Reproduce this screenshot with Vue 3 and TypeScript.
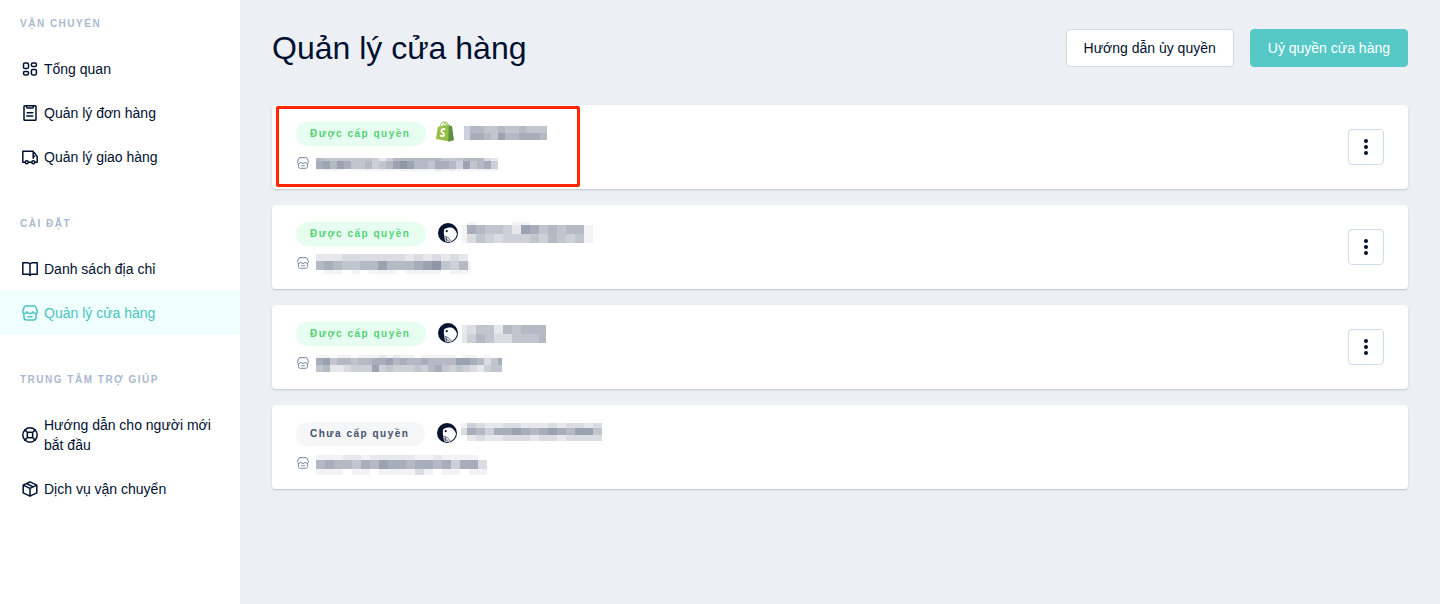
<script setup lang="ts">
type IconName = 'overview' | 'orders' | 'truck' | 'book' | 'store' | 'support' | 'box'

interface NavItem {
  label: string
  icon: IconName
  active?: boolean
}

interface NavGroup {
  title: string
  items: NavItem[]
}

interface MosaicRow {
  h: number
  tones: string
}

interface Mosaic {
  width: number
  top: number
  lead: number
  cell: number
  rows: MosaicRow[]
}

interface Store {
  id: number
  granted: boolean
  platform: 'shopify' | 'whale'
  name: Mosaic
  email: Mosaic
  highlighted?: boolean
}

interface Cell {
  x: number
  y: number
  w: number
  h: number
  o: number
}

const storeIconPath =
  'M4 .9h8c1 0 1.600.5 1.900 1.400l1.300 4.100c.3 1.300-.6 2.200-1.700 2.200-1.300 0-2-.8-2.500-1.900-.4 1.200-1.500 1.900-3 1.900s-2.600-.7-3-1.900C4.500 7.800 3.800 8.600 2.500 8.600 1.400 8.600.5 7.700.8 6.400l1.300-4.100C2.400 1.400 3 .9 4 .9zM1.900 8.700v3.600c0 1.800 1 2.800 2.800 2.800h6.600c1.800 0 2.800-1 2.800-2.800V8.700M6 11.700h4'

const groups: NavGroup[] = [
  {
    title: 'Vận chuyển',
    items: [
      { label: 'Tổng quan', icon: 'overview' },
      { label: 'Quản lý đơn hàng', icon: 'orders' },
      { label: 'Quản lý giao hàng', icon: 'truck' },
    ],
  },
  {
    title: 'Cài đặt',
    items: [
      { label: 'Danh sách địa chỉ', icon: 'book' },
      { label: 'Quản lý cửa hàng', icon: 'store', active: true },
    ],
  },
  {
    title: 'Trung tâm trợ giúp',
    items: [
      { label: 'Hướng dẫn cho người mới bắt đầu', icon: 'support' },
      { label: 'Dịch vụ vận chuyển', icon: 'box' },
    ],
  },
]

// Each digit is the strength of one block in a masked text.
const stores: Store[] = [
  {
    id: 1,
    granted: true,
    platform: 'shopify',
    highlighted: true,
    name: {
      width: 85, top: 4, lead: 6, cell: 7,
      rows: [{ h: 7, tones: '466556556555' }, { h: 7, tones: '477658667776' }],
    },
    email: {
      width: 182, top: 7, lead: 7, cell: 7,
      rows: [
        { h: 3, tones: '65555555424666666655566632' },
        { h: 8, tones: '78687556456898665776485674' },
        { h: 2, tones: '11110111111111111212111111' },
      ],
    },
  },
  {
    id: 2,
    granted: true,
    platform: 'whale',
    name: {
      width: 131, top: 0, lead: 5, cell: 9,
      rows: [
        { h: 3, tones: '010000110000000' },
        { h: 9, tones: '176554287565661' },
        { h: 9, tones: '135434445465451' },
      ],
    },
    email: {
      width: 155, top: 3, lead: 8, cell: 9,
      rows: [
        { h: 7, tones: '222333333323232320' },
        { h: 9, tones: '676556686667895461' },
        { h: 4, tones: '011010111011110110' },
      ],
    },
  },
  {
    id: 3,
    granted: true,
    platform: 'whale',
    name: {
      width: 84, top: 3, lead: 5, cell: 9,
      rows: [{ h: 9, tones: '2355265666' }, { h: 9, tones: '2465335556' }],
    },
    email: {
      width: 186, top: 4, lead: 7, cell: 7,
      rows: [
        { h: 3, tones: '110110111212110111110110100' },
        { h: 7, tones: '785665667786766766668876357' },
        { h: 7, tones: '562234448454445467545432455' },
      ],
    },
  },
  {
    id: 4,
    granted: false,
    platform: 'whale',
    name: {
      width: 141, top: 1, lead: 6, cell: 9,
      rows: [
        { h: 5, tones: '1432233222323323' },
        { h: 7, tones: '3764778767876885' },
        { h: 6, tones: '0232233323323333' },
      ],
    },
    email: {
      width: 171, top: 4, lead: 9, cell: 9,
      rows: [
        { h: 5, tones: '1112212222211211110' },
        { h: 9, tones: '6766576877677674773' },
        { h: 7, tones: '1110110111131011011' },
      ],
    },
  },
]

function cellsOf(m: Mosaic): Cell[] {
  const cells: Cell[] = []
  let y = m.top
  for (const row of m.rows) {
    let x = 0
    for (let i = 0; i < row.tones.length; i++) {
      const w = i === 0 ? m.lead : m.cell
      cells.push({ x, y, w, h: row.h, o: Number(row.tones[i]) / 9 })
      x += w
    }
    y += row.h
  }
  return cells
}
</script>

<template>
  <div class="layout">
    <aside class="sidebar">
      <nav>
        <section v-for="group in groups" :key="group.title" class="group">
          <h2 class="group-title">{{ group.title }}</h2>
          <ul class="menu">
            <li v-for="item in group.items" :key="item.label">
              <a href="#" class="menu-link" :class="{ active: item.active }">
                <svg class="menu-icon" viewBox="0 0 16 16" aria-hidden="true">
                  <template v-if="item.icon === 'overview'">
                    <rect x="1.5" y="2" width="5" height="5.6" rx="1.4" />
                    <rect x="9.4" y="2" width="5" height="3.6" rx="1.4" />
                    <rect x="1.5" y="10.4" width="5" height="3.6" rx="1.4" />
                    <rect x="9.4" y="8.4" width="5" height="5.6" rx="1.4" />
                  </template>
                  <template v-else-if="item.icon === 'orders'">
                    <rect x="2" y="0.8" width="12" height="14.4" rx="0.8" />
                    <path d="M4.6 1v1.1c0 .6.4 1 1 1h4.800c.6 0 1-.4 1-1V1M5.200 7.700h5.600M4.800 11h6" />
                  </template>
                  <template v-else-if="item.icon === 'truck'">
                    <path d="M2.500 13.200H.8V2.200h10.400M6.700 13.200h2.500M11.200 2.200v1.600h1.200l2.800 3.800v5.600h-1.700M11.200 7.300h1.400M11.200 3.800v5.400" />
                    <circle cx="4.700" cy="13.300" r="1.500" />
                    <circle cx="11.300" cy="13.300" r="1.500" />
                  </template>
                  <template v-else-if="item.icon === 'book'">
                    <path d="M8 3.200C7.500 2.300 6.700 1.800 5.600 1.800H.8v11.400h5.400c.9 0 1.500.5 1.800 1.300.3-.8.9-1.300 1.800-1.300h5.400V1.800h-4.800C9.300 1.800 8.500 2.300 8 3.200zM8 3.200v11.300" />
                  </template>
                  <template v-else-if="item.icon === 'store'">
                    <path :d="storeIconPath" />
                  </template>
                  <template v-else-if="item.icon === 'support'">
                    <circle cx="8" cy="8" r="7.200" />
                    <rect x="5.300" y="5.300" width="5.400" height="5.400" rx="1.500" />
                    <path d="M2.900 2.900l2.800 2.800M13.100 2.900l-2.800 2.800M2.900 13.100l2.800-2.800M13.100 13.100l-2.800-2.800" />
                  </template>
                  <template v-else>
                    <path d="M8 .8l6.800 3.300v7.800L8 15.200l-6.800-3.300V4.100L8 .8zM1.200 4.100L8 7.400l6.800-3.300M8 7.400v7.800M4.500 2.500l6.700 3.300" />
                  </template>
                </svg>
                <span>{{ item.label }}</span>
              </a>
            </li>
          </ul>
        </section>
      </nav>
    </aside>

    <main class="content">
      <header class="page-header">
        <h1>Quản lý cửa hàng</h1>
        <div class="actions">
          <button type="button" class="btn">Hướng dẫn ủy quyền</button>
          <button type="button" class="btn btn-primary">Uỷ quyền cửa hàng</button>
        </div>
      </header>

      <ul class="stores">
        <li v-for="store in stores" :key="store.id" class="card">
          <div class="info">
            <div class="name-line">
              <span class="badge" :class="{ granted: store.granted }">
                {{ store.granted ? 'Được cấp quyền' : 'Chưa cấp quyền' }}
              </span>
              <svg v-if="store.platform === 'shopify'" class="logo-shopify" viewBox="0 0 18 21" aria-hidden="true">
                <path d="M4 5.500C4.600 2.800 6.300.9 8 1c1.600.1 2.300 1.700 2.400 4M7.200 5c.3-2.200 1.500-3.600 2.900-3.600 1 0 1.700.9 2 2.600" fill="none" stroke="#95bf47" stroke-width="1" />
                <path d="M1.800 5.900l11-2.500.9 17.100L0 18z" fill="#95bf47" />
                <path d="M12.800 3.400l1.500 1.500 1.700.2L18 19.300l-5.700 1.500z" fill="#5e8e3e" />
                <path d="M9.300 8.500c-1.700-.9-4-.3-3.900 1.500.1 1.900 3 1.900 2.700 3.900-.3 1.700-2.400 1.600-4 .4" fill="none" stroke="#fff" stroke-width="1.900" />
              </svg>
              <svg v-else class="logo-whale" viewBox="0 0 20 20" aria-hidden="true">
                <circle cx="10" cy="10" r="10" fill="#06142f" />
                <path d="M6.200 6.300C8 4.800 10.500 4.300 13.500 4.500c2.800 1.200 4.700 3.300 5.500 6.300-.6 3.600-2.600 6.200-5.700 7.600L6.600 14C5.700 11.300 5.600 8.700 6.200 6.300z" fill="#fff" />
                <path d="M6.400 13.200l7 5.200c-1.900.7-3.800.8-5.700.2C6.800 17.200 6.300 15.300 6.400 13.200z" fill="#eef0f3" />
                <path d="M6.600 13.200c3 .6 5.400 2.400 6.700 5M8.200 14l.4 4.200M7 15.500l4.500 3" fill="none" stroke="#06142f" stroke-width=".6" />
                <circle cx="8.700" cy="8.200" r="1.100" fill="#06142f" />
              </svg>
              <svg class="mask" :width="store.name.width" height="24" aria-hidden="true">
                <rect v-for="(c, i) in cellsOf(store.name)" :key="i" :x="c.x" :y="c.y" :width="c.w" :height="c.h" :fill-opacity="c.o" />
              </svg>
            </div>
            <div class="email-line">
              <svg class="email-icon" viewBox="0 0 16 16" aria-hidden="true">
                <path :d="storeIconPath" />
              </svg>
              <svg class="mask" :width="store.email.width" height="24" aria-hidden="true">
                <rect v-for="(c, i) in cellsOf(store.email)" :key="i" :x="c.x" :y="c.y" :width="c.w" :height="c.h" :fill-opacity="c.o" />
              </svg>
            </div>
          </div>
          <button v-if="store.granted" type="button" class="more" aria-label="Tùy chọn">
            <svg viewBox="0 0 16 16" aria-hidden="true">
              <circle cx="8" cy="2" r="2" />
              <circle cx="8" cy="8" r="2" />
              <circle cx="8" cy="14" r="2" />
            </svg>
          </button>
          <span v-if="store.highlighted" class="highlight"></span>
        </li>
      </ul>
    </main>
  </div>
</template>

<style>
body {
  margin: 0;
  background: #eceff4;
}
</style>

<style scoped>
.layout {
  display: flex;
  min-height: 100vh;
  font-family: "Liberation Sans", Arial, sans-serif;
  font-size: 14px;
  line-height: 20px;
  color: #00102f;
}

.sidebar {
  flex: 0 0 240px;
  box-sizing: border-box;
  padding-top: 16px;
  background: #fff;
}

.group + .group {
  margin-top: 37px;
}

.group-title {
  margin: 0 0 15px;
  padding: 0 20px;
  font-size: 10px;
  line-height: 16px;
  font-weight: 700;
  letter-spacing: 0.15em;
  text-transform: uppercase;
  color: #a9b9d0;
}

.menu,
.stores {
  margin: 0;
  padding: 0;
  list-style: none;
}

.menu-link {
  display: flex;
  align-items: center;
  gap: 6px;
  padding: 12px 16px 12px 22px;
  color: inherit;
  text-decoration: none;
}

.menu-link.active {
  background: #eefffe;
  color: #4cc3c1;
}

.menu-icon {
  flex: none;
  width: 16px;
  height: 16px;
  fill: none;
  stroke: currentColor;
  stroke-width: 1.5;
  stroke-linejoin: round;
  stroke-linecap: round;
}

.content {
  flex: 1;
  min-width: 0;
  padding: 28px 32px;
}

.page-header {
  display: flex;
  align-items: center;
  justify-content: space-between;
  margin-bottom: 37px;
}

h1 {
  margin: 0;
  font-size: 32px;
  line-height: 40px;
  font-weight: 400;
}

.actions {
  display: flex;
  gap: 16px;
}

.btn {
  height: 38px;
  padding: 0 17px;
  border: 1px solid #cddbec;
  border-radius: 4px;
  background: #fff;
  color: inherit;
  font: inherit;
}

.btn-primary {
  border-color: #56c9c7;
  background: #56c9c7;
  color: #fff;
}

.stores {
  display: flex;
  flex-direction: column;
  gap: 16px;
}

.card {
  position: relative;
  display: flex;
  align-items: center;
  justify-content: space-between;
  padding: 17px 24px;
  border-radius: 4px;
  background: #fff;
  box-shadow: 0 1px 2px rgba(40, 50, 90, 0.22);
}

.info {
  display: flex;
  flex-direction: column;
  gap: 8px;
}

.name-line {
  display: flex;
  align-items: center;
  height: 24px;
}

.badge {
  padding: 0 16px 0 14px;
  border-radius: 12px;
  background: #f4f6f8;
  color: #44526b;
  font-size: 10px;
  line-height: 24px;
  font-weight: 700;
  letter-spacing: 0.15em;
  white-space: nowrap;
}

.badge.granted {
  background: #e8fdf1;
  color: #52d273;
}

.logo-shopify {
  width: 18px;
  height: 21px;
  margin: 0 10px 6px;
}

.logo-whale {
  width: 20px;
  height: 20px;
  margin: 0 4px 2px 12px;
}

.mask {
  fill: #8f96a7;
  shape-rendering: crispEdges;
}

.email-line {
  display: flex;
  align-items: center;
  gap: 6px;
  height: 18px;
}

.email-icon {
  width: 12px;
  height: 12px;
  padding: 0 1px;
  fill: none;
  stroke: #7686a0;
  stroke-width: 1.3;
  stroke-linejoin: round;
  stroke-linecap: round;
}

.more {
  display: flex;
  align-items: center;
  justify-content: center;
  width: 36px;
  height: 36px;
  padding: 0;
  border: 1px solid #cddbec;
  border-radius: 4px;
  background: #fff;
}

.more svg {
  width: 16px;
  height: 16px;
  fill: #00102f;
}

.highlight {
  position: absolute;
  top: 1px;
  left: 4px;
  box-sizing: border-box;
  width: 304px;
  height: 81px;
  border: 3px solid #ff2600;
  border-radius: 2px;
  pointer-events: none;
}
</style>
